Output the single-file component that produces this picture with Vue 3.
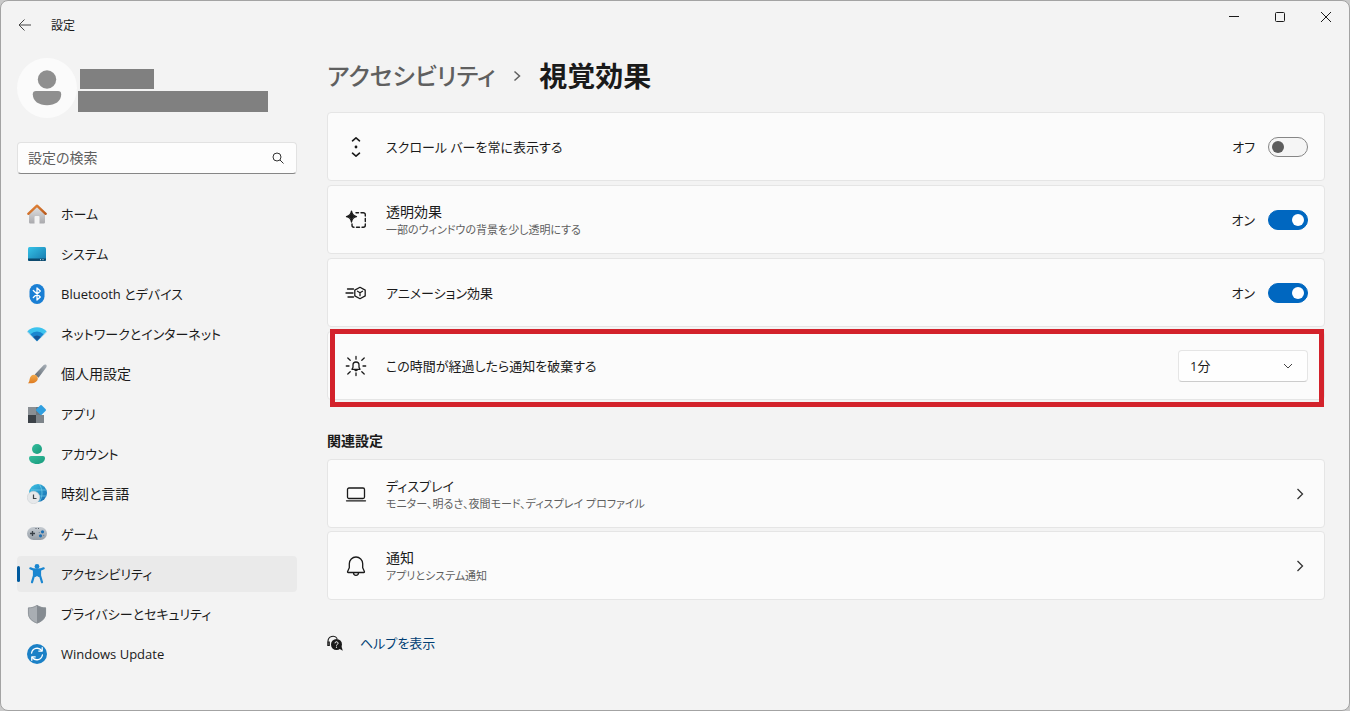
<script setup>
import { ref, reactive } from 'vue'

const search = ref('')
const current = ref('accessibility')
const dismissTime = ref('1')

// inner markup of the 20x20 sidebar icons
const navIcons = {
  home: `
    <defs>
      <linearGradient id="h1" x1="0" y1="0" x2="0" y2="1"><stop offset="0" stop-color="#e4e4e4"/><stop offset="1" stop-color="#a9a9ad"/></linearGradient>
      <linearGradient id="h2" x1="0" y1="0" x2="1" y2="1"><stop offset="0" stop-color="#e88a3c"/><stop offset="1" stop-color="#b9591c"/></linearGradient>
    </defs>
    <path d="M2 9 10 2l8 7v9.300a1.200 1.200 0 0 1-1.200 1.200H12.500V13a1 1 0 0 0-1-1h-3a1 1 0 0 0-1 1v6.500H3.200A1.200 1.200 0 0 1 2 18.300z" fill="url(#h1)"/>
    <path d="M1.300 9.800 10 1.700l8.700 8.100" fill="none" stroke="url(#h2)" stroke-width="2.400" stroke-linecap="round" stroke-linejoin="round"/>`,
  system: `
    <defs><linearGradient id="s1" x1="0" y1="0" x2="1" y2="1"><stop offset="0" stop-color="#35c3e8"/><stop offset="1" stop-color="#1577ac"/></linearGradient></defs>
    <rect x="1" y="3" width="18" height="14" rx="1.500" fill="url(#s1)"/>
    <path d="M1 14.500h18v1a1.500 1.500 0 0 1-1.500 1.500h-15A1.500 1.500 0 0 1 1 15.500z" fill="#0d4a6e"/>
    <path d="M13 15.700h1M15.500 15.700h1" stroke="#cfe9f5" stroke-width="1"/>`,
  bluetooth: `
    <rect x="2.500" y="0" width="15" height="20" rx="7.500" fill="#1a7fd4"/>
    <path d="M6.300 6.500 13.300 13 10 16V4l3.300 3-7 6.500" fill="none" stroke="#fff" stroke-width="1.300" stroke-linejoin="round" stroke-linecap="round"/>`,
  network: `
    <path d="M.4 7.300a13.600 13.600 0 0 1 19.200 0L10 17z" fill="#3cc3ee"/>
    <path d="M3.400 10.300a9.300 9.300 0 0 1 13.200 0L10 17z" fill="#1a86cf"/>
    <path d="M6.200 13.100a5.400 5.400 0 0 1 7.600 0L10 17z" fill="#155699"/>
    <path d="M.4 7.300a1 1 0 0 0 0 1.200l8.900 8.800a1 1 0 0 0 1.400 0l8.900-8.800a1 1 0 0 0 0-1.200L10 16z" fill="#1a86cf" opacity=".25"/>`,
  personal: `
    <defs>
      <linearGradient id="p1" x1="1" y1="0" x2="0" y2="1"><stop offset="0" stop-color="#aab2ba"/><stop offset="1" stop-color="#5c656e"/></linearGradient>
      <linearGradient id="p2" x1="0" y1="0" x2="0" y2="1"><stop offset="0" stop-color="#f3ab4c"/><stop offset="1" stop-color="#dd7a20"/></linearGradient>
    </defs>
    <path d="M19.200.800c.8.800.6 1.900 0 2.800l-7.700 10.200-3.700-3.400L16.500 1.200c.8-.8 1.900-1.100 2.700-.4z" fill="url(#p1)"/>
    <path d="M7.300 10.800c1.800.1 3.400 1.700 3.500 3.500.1 3.300-3.300 5.700-10 4.900 1.500-.8 1.500-2 1.800-3.900.4-2.700 2.200-4.700 4.700-4.500z" fill="url(#p2)"/>`,
  apps: `
    <rect x="1" y="3" width="8" height="8" fill="#8a8f94"/>
    <rect x="1" y="11" width="8" height="8" fill="#3c4248"/>
    <rect x="9" y="11" width="8" height="8" fill="#7d848a"/>
    <path d="M9 3h5v8H9z" fill="#70777d"/>
    <path d="m13.300 1.300-4 4a1 1 0 0 0 0 1.400l4 4a1 1 0 0 0 1.400 0l4-4a1 1 0 0 0 0-1.400l-4-4a1 1 0 0 0-1.400 0z" fill="#2f9fe0"/>`,
  accounts: `
    <defs><linearGradient id="a1" x1="0" y1="0" x2="1" y2="1"><stop offset="0" stop-color="#35bd9c"/><stop offset="1" stop-color="#179a7c"/></linearGradient></defs>
    <circle cx="10" cy="5" r="5" fill="url(#a1)"/>
    <path d="M4 12h12a2 2 0 0 1 2 2c0 3.800-3.500 6-8 6s-8-2.200-8-6a2 2 0 0 1 2-2z" fill="url(#a1)"/>`,
  time: `
    <defs><linearGradient id="t1" x1="0" y1="0" x2="1" y2="1"><stop offset="0" stop-color="#3fc6e6"/><stop offset="1" stop-color="#1567ad"/></linearGradient></defs>
    <circle cx="11" cy="9" r="9" fill="url(#t1)"/>
    <path d="M12 0c4 5 4 13 0 18M4 6h15M5 12h14.500" fill="none" stroke="#7fd6f0" stroke-width=".6"/>
    <circle cx="6.500" cy="13.500" r="6.200" fill="#e6e8ea" stroke="#cdd1d5" stroke-width=".6"/>
    <path d="M6.500 10.500v4h3" fill="none" stroke="#3c4248" stroke-width="1.200"/>`,
  game: `
    <defs><linearGradient id="g1" x1="0" y1="0" x2="0" y2="1"><stop offset="0" stop-color="#c5cbd1"/><stop offset="1" stop-color="#959da6"/></linearGradient></defs>
    <rect x="0" y="3" width="20" height="13" rx="6.500" fill="url(#g1)"/>
    <path d="M5.500 7v5M3 9.500h5" stroke="#394047" stroke-width="1.300"/>
    <path d="M8.500 4.500h1M11 4.500h1" stroke="#50575e"/>
    <circle cx="15.500" cy="7.800" r="1.600" fill="#1c6fb3"/>
    <circle cx="13.500" cy="11.800" r="1.600" fill="#1c6fb3"/>
    <circle cx="12.300" cy="8.500" r=".6" fill="#5d7f9b"/>
    <circle cx="16.700" cy="11.300" r=".6" fill="#5d7f9b"/>`,
  accessibility: `
    <circle cx="10" cy="2.500" r="2.400" fill="#1a86d0"/>
    <path d="M3.300 4.300c4.400 2.600 9 2.600 13.400 0" fill="none" stroke="#1a86d0" stroke-width="2.200" stroke-linecap="round"/>
    <path d="M7 5.500h6v6l2 6.800M7 5.500v6l-2 6.800" fill="none" stroke="#1a86d0" stroke-width="2.200" stroke-linecap="round" stroke-linejoin="round"/>
    <path d="M6.500 5.500h7V13h-2L10 12l-1.500 1h-2z" fill="#1a86d0"/>`,
  privacy: `
    <path d="M10 1c2.600 1.900 5.400 2.500 9 2.600V9c0 5-3.300 8.500-9 10.500z" fill="#858b91"/>
    <path d="M10 1C7.400 2.900 4.600 3.500 1 3.600V9c0 5 3.300 8.500 9 10.500z" fill="#a9aeb3"/>
    <path d="M10 1.400c2.600 1.700 5.200 2.400 8.600 2.600V9c0 4.700-3.100 8-8.600 10C4.500 17 1.400 13.700 1.400 9V4C4.800 3.800 7.400 3.100 10 1.400z" fill="none" stroke="#8a9096" stroke-width=".8"/>`,
  update: `
    <circle cx="10" cy="10" r="10" fill="#1b80c6"/>
    <path d="M4.600 9a5.600 5.600 0 0 1 10-2.500M15.400 11a5.600 5.600 0 0 1-10 2.500" fill="none" stroke="#fff" stroke-width="1.300" stroke-linecap="round"/>
    <path d="M15.200 3.700v3.400h-3.400M4.800 16.300v-3.400h3.400" fill="none" stroke="#fff" stroke-width="1.300" stroke-linecap="round" stroke-linejoin="round"/>`,
}

// line icons used in the setting cards
const cardIcons = {
  scrollbar: `
    <path d="M6.500 3.800 10 .800l3.500 3M6.500 16.200l3.500 3 3.500-3" stroke-width="1.600"/>
    <circle cx="10" cy="10" r="1.400" fill="#1a1a1a" stroke="none"/>`,
  transparency: `
    <path d="M5.500 1.200c.5 3.600 1.600 4.800 5 5.400-3.400.6-4.500 1.800-5 5.400-.5-3.600-1.600-4.800-5-5.400 3.400-.6 4.500-1.800 5-5.400z" fill="#1a1a1a" stroke="#1a1a1a"/>
    <path d="M10 2.700h2.500M15 2.700h2.300a2 2 0 0 1 2 2V6M19.300 8.500v3M19.300 14v1.300a2 2 0 0 1-2 2H16M13.500 17.300h-3M8 17.300a2 2 0 0 1-2-2V14" stroke-width="1.400"/>`,
  animation: `
    <path d="M1.500 6h6M0 10h7M2 14h5.500" />
    <path d="m14 4.300 5.200 2.800v5.800L14 15.700l-5.200-2.800V7.100z"/>
    <path d="m11.500 8.300 2.500 1.400 2.500-1.400M14 9.700v3"/>`,
  dismiss: `
    <path d="M6 13.300h8l-1-2V9a3 3 0 0 0-6 0v2.300zM8.800 13.500a1.200 1.200 0 0 0 2.400 0"/>
    <path d="M10 .5v2.700M10 17v2.500M.3 10H3M17 10h2.700M1.800 2l2.400 2.200M18.200 2l-2.400 2.200M1.800 18l2.400-2.200M18.200 18l-2.400-2.200"/>`,
  display: `
    <rect x="1.500" y="4" width="17" height="10.500" rx="1.500"/>
    <path d="M.5 16.800h19"/>`,
  bell: `
    <path d="M10 1a6.700 6.700 0 0 0-6.700 6.700v4.100l-1.700 3.700c-.2.500 0 1 .6 1h15.600c.6 0 .8-.5.600-1l-1.700-3.700V7.700A6.700 6.700 0 0 0 10 1z"/>
    <path d="M7.500 16.800a2.500 2.500 0 0 0 5 0"/>`,
}

const navItems = [
  { id: 'home', label: 'ホーム' },
  { id: 'system', label: 'システム' },
  { id: 'bluetooth', label: 'Bluetooth とデバイス' },
  { id: 'network', label: 'ネットワークとインターネット' },
  { id: 'personal', label: '個人用設定', kanji: true },
  { id: 'apps', label: 'アプリ' },
  { id: 'accounts', label: 'アカウント' },
  { id: 'time', label: '時刻と言語', kanji: true },
  { id: 'game', label: 'ゲーム' },
  { id: 'accessibility', label: 'アクセシビリティ' },
  { id: 'privacy', label: 'プライバシーとセキュリティ' },
  { id: 'update', label: 'Windows Update' },
]

const toggles = reactive([
  { id: 'scrollbar', label: 'スクロール バーを常に表示する', on: false },
  { id: 'transparency', label: '透明効果', note: '一部のウィンドウの背景を少し透明にする', on: true, kanji: true },
  { id: 'animation', label: 'アニメーション効果', on: true },
])

const related = [
  { id: 'display', label: 'ディスプレイ', note: 'モニター、明るさ、夜間モード、ディスプレイ プロファイル' },
  { id: 'bell', label: '通知', note: 'アプリとシステム通知', kanji: true },
]
</script>

<template>
  <div class="window">
    <header class="titlebar">
      <button class="back" type="button" aria-label="戻る">
        <svg width="14" height="14" viewBox="0 0 14 14"><path d="M13 7H1.500M6.500 1.500 1 7l5.500 5.500" /></svg>
      </button>
      <span class="app-name">設定</span>
      <div class="controls">
        <button type="button" aria-label="最小化">
          <svg width="12" height="12" viewBox="0 0 12 12"><path d="M1 5.500h10" /></svg>
        </button>
        <button type="button" aria-label="最大化">
          <svg width="12" height="12" viewBox="0 0 12 12"><rect x="1.500" y="1.500" width="9" height="9" rx="1" /></svg>
        </button>
        <button type="button" aria-label="閉じる">
          <svg width="12" height="12" viewBox="0 0 12 12"><path d="m1 1 10 10M11 1 1 11" /></svg>
        </button>
      </div>
    </header>

    <div class="layout">
      <aside class="sidebar">
        <div class="profile">
          <svg class="avatar" width="60" height="60" viewBox="0 0 60 60">
            <circle cx="30" cy="30" r="30" fill="#fbfbfb" />
            <circle cx="30" cy="21.500" r="9.200" fill="#8f8f8f" />
            <path d="M19 33h22a3.200 3.200 0 0 1 3.200 3.200c0 7-6.200 11-14.200 11s-14.200-4-14.200-11A3.200 3.200 0 0 1 19 33z" fill="#8f8f8f" />
          </svg>
          <div class="masks">
            <div class="mask name"></div>
            <div class="mask mail"></div>
          </div>
        </div>

        <label class="search">
          <input v-model="search" type="text" placeholder="設定の検索" aria-label="設定の検索" />
          <svg width="12" height="12" viewBox="0 0 12 12"><circle cx="5" cy="5" r="4" /><path d="m8 8 3.500 3.500" /></svg>
        </label>

        <nav class="nav">
          <a
            v-for="item in navItems"
            :key="item.id"
            href="#"
            class="nav-item"
            :class="{ active: current === item.id, kanji: item.kanji }"
            @click.prevent="current = item.id"
          >
            <svg width="20" height="20" viewBox="0 0 20 20" v-html="navIcons[item.id]"></svg>
            <span>{{ item.label }}</span>
          </a>
        </nav>
      </aside>

      <main class="content">
        <h1 class="crumbs">
          <a href="#" @click.prevent>アクセシビリティ</a>
          <svg width="8" height="12" viewBox="0 0 8 12"><path d="m1.500 1.500 5 4.500-5 4.500" /></svg>
          <span>視覚効果</span>
        </h1>

        <div class="cards">
          <div v-for="t in toggles" :key="t.id" class="card">
            <svg class="line-icon" width="20" height="20" viewBox="0 0 20 20" v-html="cardIcons[t.id]"></svg>
            <label class="card-text" :for="t.id">
              <span class="card-title" :class="{ kanji: t.kanji }">{{ t.label }}</span>
              <span v-if="t.note" class="card-note">{{ t.note }}</span>
            </label>
            <span class="state">{{ t.on ? 'オン' : 'オフ' }}</span>
            <input :id="t.id" v-model="t.on" class="toggle" type="checkbox" role="switch" />
          </div>

          <div class="card marked">
            <svg class="line-icon" width="20" height="20" viewBox="0 0 20 20" v-html="cardIcons.dismiss"></svg>
            <label class="card-text" for="dismiss">
              <span class="card-title">この時間が経過したら通知を破棄する</span>
            </label>
            <div class="select">
              <select id="dismiss" v-model="dismissTime">
                <option value="1">1分</option>
                <option value="5">5分</option>
              </select>
              <svg width="10" height="6" viewBox="0 0 10 6"><path d="m1 1 4 4 4-4" /></svg>
            </div>
          </div>
        </div>

        <h2>関連設定</h2>
        <div class="cards related">
          <a v-for="r in related" :key="r.id" href="#" class="card" @click.prevent>
            <svg class="line-icon" width="20" height="20" viewBox="0 0 20 20" v-html="cardIcons[r.id]"></svg>
            <span class="card-text">
              <span class="card-title" :class="{ kanji: r.kanji }">{{ r.label }}</span>
              <span class="card-note">{{ r.note }}</span>
            </span>
            <svg class="chevron" width="8" height="12" viewBox="0 0 8 12"><path d="m1.500 1 5 5-5 5" /></svg>
          </a>
        </div>

        <div class="help">
          <svg width="16" height="16" viewBox="0 0 16 16">
            <path d="M1 11V6.500a5 5 0 0 1 9.300-2.700M.8 7v3.500h1.500V7z" fill="none" stroke="#1a1a1a" stroke-width="1.100" />
            <circle cx="9.500" cy="9.500" r="5.500" fill="#1a1a1a" />
            <path d="m12 13.500 3.800 2.300-1.300-4.300z" fill="#1a1a1a" />
            <path d="M8 8.300a1.500 1.500 0 1 1 2.200 1.300c-.5.300-.7.500-.7 1" fill="none" stroke="#fff" />
            <circle cx="9.500" cy="12.200" r=".6" fill="#fff" />
          </svg>
          <a href="#" @click.prevent>ヘルプを表示</a>
        </div>
      </main>
    </div>
  </div>
</template>

<style>
html {
  background: #c9c9c9;
}
</style>

<style scoped>
* {
  box-sizing: border-box;
}

.window {
  display: flex;
  flex-direction: column;
  min-height: 100vh;
  background: #f3f3f3;
  border: 1px solid #a3a3a3;
  border-radius: 8px;
  color: #1a1a1a;
  font-family: 'Open Sans', 'Noto Sans CJK JP', sans-serif;
  font-size: 13px;
  line-height: 20px;
  font-feature-settings: 'palt';
}
a {
  color: inherit;
  text-decoration: none;
}
button,
input,
select {
  font: inherit;
  font-feature-settings: inherit;
  color: inherit;
}
.kanji {
  font-size: 14px;
}

.titlebar {
  display: flex;
  align-items: center;
  height: 48px;
  padding-left: 16px;
}
.titlebar button {
  display: flex;
  align-items: center;
  justify-content: center;
  padding: 0;
  border: 0;
  background: transparent;
}
.titlebar svg {
  fill: none;
  stroke: #1a1a1a;
}
.titlebar .back {
  width: 16px;
  height: 32px;
  margin-right: 18px;
}
.titlebar .back svg {
  stroke: #444;
}
.app-name {
  padding-top: 2px;
  font-size: 12px;
}
.controls {
  display: flex;
  align-self: flex-start;
  margin-left: auto;
}
.controls button {
  width: 46px;
  height: 32px;
}

.layout {
  display: grid;
  grid-template-columns: 280px minmax(0, 1fr);
  gap: 30px;
  padding: 9px 24px 24px 16px;
}

.profile {
  display: flex;
  align-items: center;
  gap: 1px;
  height: 60px;
}
.masks {
  display: flex;
  flex-direction: column;
  gap: 2px;
  padding-top: 4px;
}
.mask {
  background: #808080;
}
.mask.name {
  width: 74px;
  height: 20px;
  margin-left: 2px;
}
.mask.mail {
  width: 190px;
  height: 21px;
}

.search {
  display: flex;
  align-items: center;
  height: 32px;
  margin: 24px 0 22px;
  padding: 0 12px 0 10px;
  background: #fdfdfd;
  border: 1px solid #e2e2e2;
  border-bottom-color: #868686;
  border-radius: 4px;
  font-size: 14px;
}
.search input {
  flex: 1;
  min-width: 0;
  padding: 0;
  border: 0;
  outline: none;
  background: transparent;
}
.search input::placeholder {
  color: #5f5f5f;
}
.search svg {
  fill: none;
  stroke: #333;
}

.nav {
  display: flex;
  flex-direction: column;
  gap: 4px;
}
.nav-item {
  position: relative;
  display: flex;
  align-items: center;
  gap: 14px;
  height: 36px;
  padding: 0 10px;
  border-radius: 4px;
}
.nav-item.active {
  background: #eaeaea;
}
.nav-item.active::before {
  content: '';
  position: absolute;
  left: 0;
  top: 10px;
  width: 3px;
  height: 16px;
  border-radius: 2px;
  background: #005a9e;
}

.crumbs {
  display: flex;
  align-items: center;
  gap: 18px;
  margin: 0 0 18px;
  font-size: 28px;
  font-weight: 700;
  line-height: 36px;
}
.crumbs a {
  color: #5f5f5f;
  font-size: 24px;
  font-weight: 500;
}
.crumbs svg {
  fill: none;
  stroke: #5f5f5f;
  stroke-width: 1.5;
}

.cards {
  display: flex;
  flex-direction: column;
  gap: 4px;
}
.cards.related {
  gap: 3px;
}
.card {
  position: relative;
  display: flex;
  align-items: center;
  min-height: 69px;
  padding: 0 16px 0 18px;
  background: #fbfbfb;
  border: 1px solid #e5e5e5;
  border-radius: 4px;
}
.card.marked::after {
  content: '';
  position: absolute;
  inset: -3px 0 -8px 2px;
  border: 5px solid #d3222b;
  pointer-events: none;
}
.line-icon {
  flex: none;
  margin-right: 20px;
  overflow: visible;
  fill: none;
  stroke: #1a1a1a;
  stroke-width: 1.3;
  stroke-linecap: round;
  stroke-linejoin: round;
}
.card-text {
  display: flex;
  flex-direction: column;
  flex: 1;
}
.card-note {
  color: #5f5f5f;
  font-size: 11px;
  line-height: 16px;
}
.state {
  margin-right: 13px;
}
.chevron {
  margin-right: 4px;
  fill: none;
  stroke: #333;
  stroke-width: 1.3;
}

.toggle {
  appearance: none;
  display: flex;
  align-items: center;
  width: 40px;
  height: 20px;
  margin: 0;
  padding: 0 3px;
  border: 1px solid #868686;
  border-radius: 10px;
  background: #f5f5f5;
}
.toggle::before {
  content: '';
  width: 12px;
  height: 12px;
  border-radius: 50%;
  background: #5c5c5c;
}
.toggle:checked {
  justify-content: flex-end;
  background: #0067c0;
  border-color: #0067c0;
}
.toggle:checked::before {
  background: #fff;
}

.select {
  position: relative;
  display: flex;
  align-items: center;
}
.select select {
  appearance: none;
  width: 130px;
  height: 32px;
  padding: 0 30px 0 11px;
  background: #fefefe;
  border: 1px solid #e5e5e5;
  border-bottom-color: #cccccc;
  border-radius: 4px;
}
.select svg {
  position: absolute;
  right: 15px;
  fill: none;
  stroke: #444;
  pointer-events: none;
}

h2 {
  margin: 31px 0 8px;
  font-size: 14px;
  font-weight: 700;
  line-height: 20px;
}

.help {
  display: flex;
  align-items: center;
  gap: 17px;
  margin-top: 33px;
}
.help a {
  color: #003e73;
}
</style>
